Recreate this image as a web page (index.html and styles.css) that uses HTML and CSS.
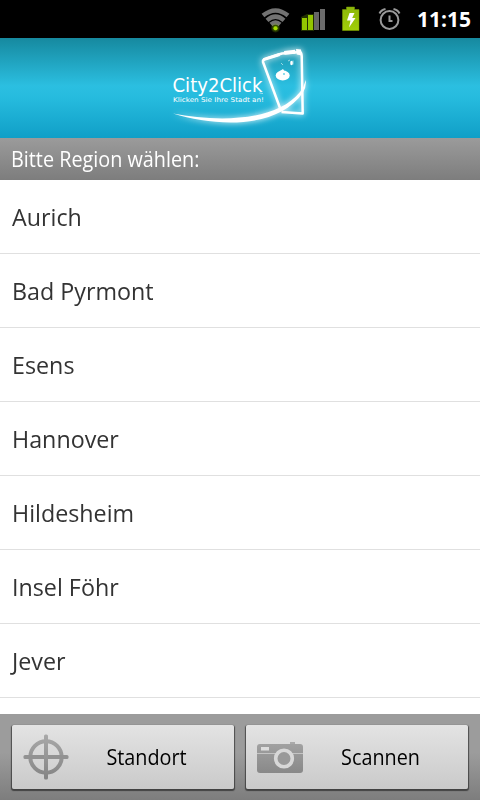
FILE: index.html
```html
<!DOCTYPE html>
<html lang="de">
<head>
  <meta charset="UTF-8">
  <title>City2Click</title>
  <link rel="stylesheet" href="styles.css">
</head>
<body>
  <div class="screen">
    <div class="statusbar">
      <svg class="status-icons" width="144" height="38" viewBox="260 0 144 38">
        <defs>
          <radialGradient id="glow">
            <stop offset="0" stop-color="#8fd000" stop-opacity="0.8"/>
            <stop offset="1" stop-color="#8fd000" stop-opacity="0"/>
          </radialGradient>
          <linearGradient id="green" x1="0" y1="0" x2="0" y2="1">
            <stop offset="0" stop-color="#8cb60b"/>
            <stop offset="1" stop-color="#a1cf08"/>
          </linearGradient>
        </defs>
        <!-- wifi -->
        <g fill="none" stroke="#727272" stroke-width="4.400">
          <path d="M263 15.500Q275.500 5.300 288 15.500"/>
          <path d="M267 20.300Q275.500 13 284 20.300"/>
          <path d="M271 24.500Q275.500 20.500 280 24.500"/>
        </g>
        <circle cx="275.500" cy="28" r="5" fill="url(#glow)"/>
        <circle cx="275.500" cy="28.300" r="2" fill="#a5dc00"/>
        <!-- signal -->
        <path d="M301 17l6-3h7v17h-13z" fill="#426000" opacity="0.5"/>
        <rect x="302" y="18" width="5" height="12" fill="#93c600"/>
        <rect x="308" y="15" width="5" height="15" fill="#93c600"/>
        <rect x="314" y="12" width="5" height="18" fill="#666"/>
        <rect x="320" y="9" width="5" height="21" fill="#6b6b6b"/>
        <!-- battery -->
        <path d="M342.500 9.500h4V7h8v2.500h4.500V30.500h-16.500z" fill="url(#green)" stroke="#7fa300" stroke-width="0.500"/>
        <path d="M349.500 13h5l-2.300 5h3.300l-6.500 9.500 1.500-7h-3.500z" fill="#fff"/>
        <!-- alarm -->
        <g fill="none" stroke="#999" stroke-width="2">
          <circle cx="389.500" cy="20" r="8.900"/>
          <path d="M389.500 15.500v5.500h3M379.500 13.500q1.500-3.500 6-4.500M399.500 13.500q-1.500-3.500-6-4.500"/>
        </g>
      </svg>
      <span class="clock">11:15</span>
    </div>

    <div class="header">
      <svg class="logo" width="160" height="100" viewBox="0 0 160 100">
        <defs>
          <filter id="halo" x="-20%" y="-20%" width="140%" height="140%">
            <feGaussianBlur stdDeviation="3"/>
          </filter>
          <g id="logo-shape">
            <path d="M120 70L103 24Q102.500 21.500 106 20.500L122 15.500 139.500 14Q141.500 14 141.700 18L142.700 75.500 121.500 74" fill="none" stroke="#fff" stroke-width="2.500" stroke-linejoin="round"/>
            <path d="M103 20.500L119 15 120 18 104 23zM124 13l11-1.200.5 4-11 1zM136 11l5 .5.700 6-5-1z" fill="#fff"/>
            <path d="M13 75.500C57 84 116 84 140 54Q144 49 145.800 42Q146.500 49 143 54.500C118 91 57 89 13 75.500z" fill="#fff"/>
          </g>
        </defs>
        <use href="#logo-shape" filter="url(#halo)"/>
        <use href="#logo-shape"/>
        <ellipse cx="122.700" cy="37.500" rx="7" ry="5" fill="#fff"/>
        <path d="M120 33l3-2 2 3" fill="#fff"/>
        <circle cx="124" cy="36" r="0.900" fill="#5acde3"/>
        <ellipse cx="131.500" cy="25" rx="1.300" ry="2.300" fill="#fff"/>
        <path d="M121 25l2 2M128 23l2-1M133 22.500v4" stroke="#fff" stroke-width="0.800" opacity="0.700"/>
        <text class="logo-name" x="12.500" y="53.500" textLength="90" lengthAdjust="spacingAndGlyphs">City2Click</text>
        <text class="logo-claim" x="13" y="64" textLength="91" lengthAdjust="spacingAndGlyphs">Klicken Sie Ihre Stadt an!</text>
        <path d="M99.500 55l3.500.5" stroke="#fff" stroke-width="0.800" opacity="0.700"/>
      </svg>
    </div>

    <div class="title"><span class="title-text">Bitte Region wählen:</span></div>

    <ul class="regions">
      <li><span>Aurich</span></li>
      <li><span>Bad Pyrmont</span></li>
      <li><span>Esens</span></li>
      <li><span>Hannover</span></li>
      <li><span>Hildesheim</span></li>
      <li><span>Insel Föhr</span></li>
      <li><span>Jever</span></li>
    </ul>

    <div class="toolbar">
      <button class="btn">
        <svg class="btn-icon" width="48" height="48" viewBox="0 0 48 48">
          <defs>
            <linearGradient id="gray" gradientUnits="userSpaceOnUse" x1="0" y1="0" x2="0" y2="48">
              <stop offset="0" stop-color="#aaa"/>
              <stop offset="1" stop-color="#828282"/>
            </linearGradient>
          </defs>
          <circle cx="24" cy="24" r="15.700" fill="none" stroke="url(#gray)" stroke-width="4"/>
          <rect x="1.500" y="22" width="45" height="4" rx="1.500" fill="#929292"/>
          <rect x="22" y="1.500" width="4" height="45" rx="1.500" fill="url(#gray)"/>
        </svg>
        <span class="btn-label">Standort</span>
      </button>
      <button class="btn">
        <svg class="btn-icon" width="48" height="48" viewBox="0 0 48 48">
          <path d="M34 11v-2h5v2z" fill="#aaa"/>
          <rect x="1" y="11" width="46" height="29" rx="3" fill="url(#gray)"/>
          <path d="M1 20.500h46" stroke="#c4c4c4"/>
          <rect x="5" y="14" width="8" height="3.500" fill="#ddd"/>
          <circle cx="28" cy="25.500" r="8.300" fill="#999" stroke="#d8d8d8" stroke-width="3.600"/>
        </svg>
        <span class="btn-label">Scannen</span>
      </button>
    </div>
  </div>
</body>
</html>
```
FILE: styles.css
```css
body {
  margin: 0;
  font-family: "Open Sans", "Noto Sans", sans-serif;
  background: #fff;
}
.screen {
  width: 480px;
  height: 800px;
  display: flex;
  flex-direction: column;
  overflow: hidden;
}
.statusbar {
  height: 38px;
  background: #000;
  display: flex;
  align-items: center;
  justify-content: flex-end;
  padding-right: 10px;
  gap: 13px;
}
.clock {
  width: 53px;
  color: #fff;
  font-size: 21px;
  font-weight: bold;
  line-height: 38px;
  white-space: nowrap;
}
.header {
  height: 100px;
  background: linear-gradient(#16899f, #2bbfe1 48%, #26bbde 60%, #109fc7);
  display: flex;
  justify-content: center;
}
.logo-name, .logo-claim {
  font-family: "DejaVu Sans", sans-serif;
  fill: #fff;
}
.logo-name {
  font-size: 19px;
}
.logo-claim {
  font-size: 6.500px;
}
.title {
  height: 42px;
  box-sizing: border-box;
  padding-left: 11px;
  background: linear-gradient(#9b9b9b, #7d7d7d);
  color: #fff;
  font-size: 22px;
  line-height: 40px;
}
.title-text, .btn-label {
  display: inline-block;
  transform: scaleX(0.900);
  transform-origin: left;
}
.regions {
  flex: 1;
  margin: 0;
  padding: 0;
  list-style: none;
}
.regions li {
  height: 73px;
  padding-left: 12px;
  border-bottom: 1px solid #e0e0e0;
  color: #333;
  font-size: 24px;
  line-height: 73px;
}
.regions span {
  display: inline-block;
  transform: scaleX(0.970);
  transform-origin: left;
}
.toolbar {
  height: 86px;
  box-sizing: border-box;
  padding: 11px 12px;
  display: flex;
  gap: 12px;
  background: linear-gradient(#9c9c9c 45%, #7d7d7d);
}
.btn {
  flex: 1;
  height: 64px;
  padding: 0 10px;
  display: flex;
  align-items: center;
  border: 0;
  border-radius: 2px;
  background: linear-gradient(#e3e3e3, #cacaca);
  box-shadow: 0 1px 1px 1px rgba(0,0,0,0.5);
  font-family: inherit;
  font-size: 22px;
  color: #000;
}
.btn-label {
  flex: 1;
  padding: 0 1px 2px 0;
  transform-origin: center;
  text-align: center;
}
```
